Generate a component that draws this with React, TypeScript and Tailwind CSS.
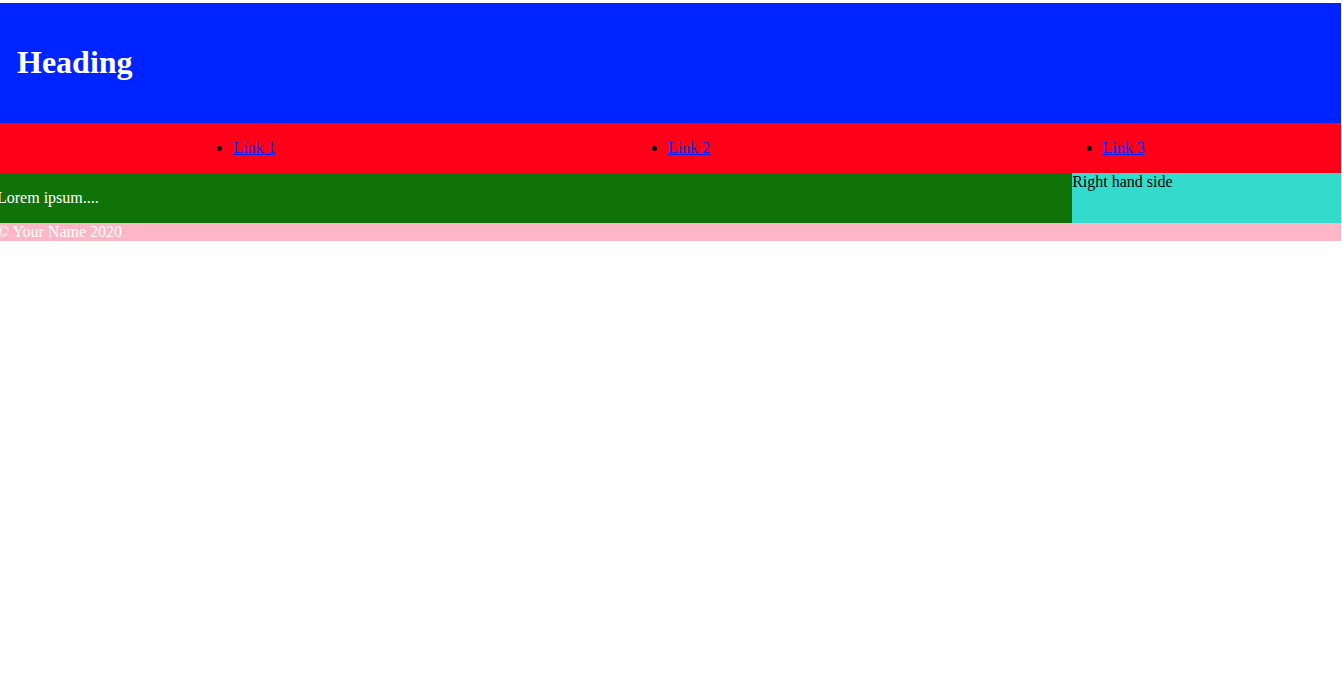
const links = ['Link 1', 'Link 2', 'Link 3'];

export default function App() {
  return (
    <div className="overflow-x-hidden bg-white pt-[3px] font-['Liberation_Serif',serif] text-base leading-[18px] text-black">
      <div className="-ml-[3px] mr-px">
        <header className="bg-[#0024ff] px-5 pt-10 pb-[42px] text-white">
          <h1 className="text-[32px] leading-[38px] font-bold">Heading</h1>
        </header>

        <nav className="bg-[#ff0018]">
          <ul className="flex list-disc justify-around py-4 pl-10">
            {links.map((label) => (
              <li key={label}>
                <a href="#" className="text-[#0024ff] underline">
                  {label}
                </a>
              </li>
            ))}
          </ul>
        </nav>

        <div className="grid grid-cols-[4fr_1fr]">
          <main className="bg-[#10730a] py-4 text-white">
            <p>Lorem ipsum....</p>
          </main>
          <aside className="bg-[#32dbcb]">Right hand side</aside>
        </div>

        <footer className="bg-[#ffb6c6] text-white">© Your Name 2020</footer>
      </div>
    </div>
  );
}
